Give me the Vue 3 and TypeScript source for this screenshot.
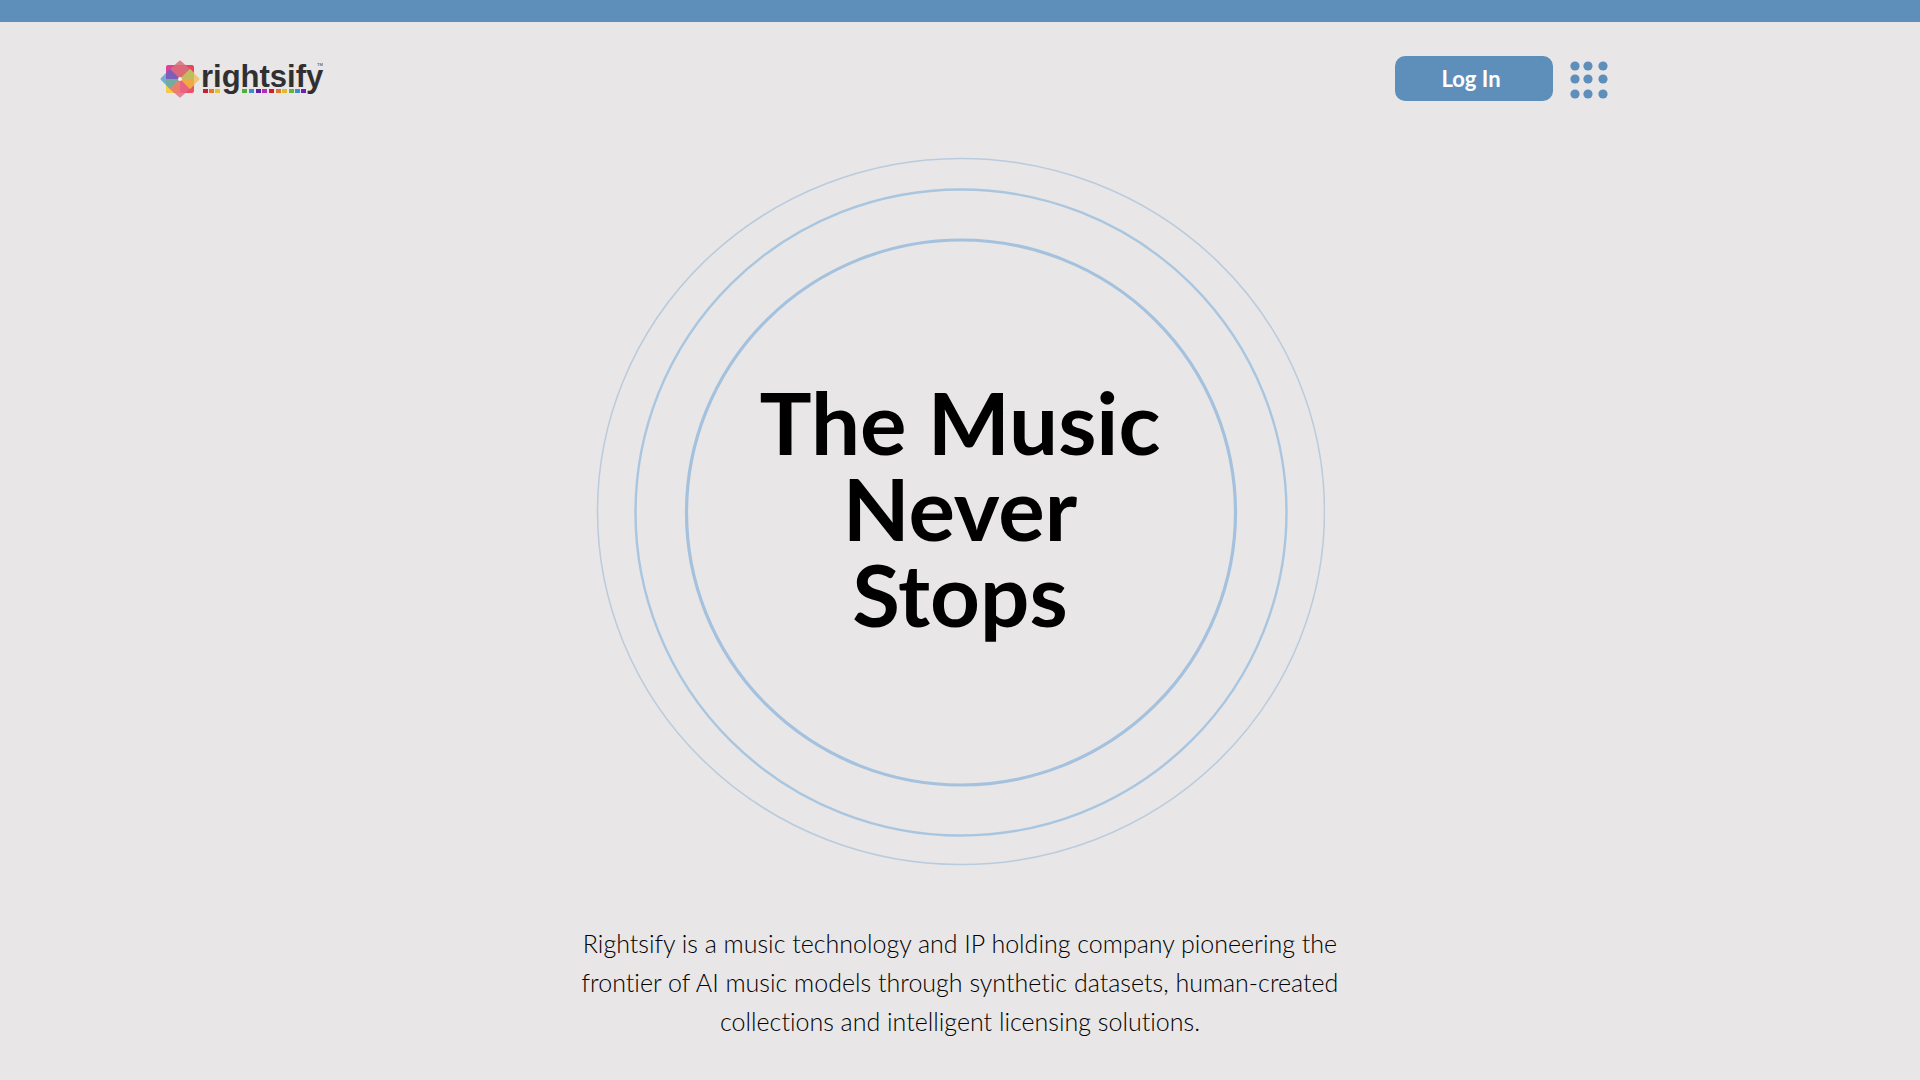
<script setup lang="ts">
interface Dash {
  x: number
  color: string
}

const dashes: Dash[] = [
  { x: 43, color: '#c8202c' },
  { x: 49, color: '#e5792a' },
  { x: 55, color: '#e3c32e' },
  { x: 82, color: '#4fae3a' },
  { x: 89, color: '#3d8bd0' },
  { x: 96, color: '#5b1fa0' },
  { x: 102, color: '#b52bc0' },
  { x: 109, color: '#cc2030' },
  { x: 116, color: '#dd7a2c' },
  { x: 122, color: '#e3b92e' },
  { x: 129, color: '#62b53a' },
  { x: 135, color: '#3d8bd0' },
  { x: 141, color: '#6a24a8' },
]

const columns: number[] = [5, 18, 33]
const rows: number[] = [7, 20, 35]
</script>

<template>
  <div class="page">
    <header class="header">
      <a href="#" class="logo" aria-label="rightsify">
        <svg width="168" height="44" viewBox="0 0 168 44">
          <g transform="translate(20 22)">
            <rect x="-14" y="-14" width="28" height="28" rx="3" fill="#e9407c" />
            <path d="M0 0V-14H11a3 3 0 0 1 3 3V0z" fill="#e8455f" />
            <path d="M0 0V14H-11a3 3 0 0 1-3-3V0z" fill="#f6cf45" />
            <path d="M0 0V14H11a3 3 0 0 0 3-3V0z" fill="#ee4f62" />
            <path d="M0 0L-10-10L-1-18Q0-19 1-18L10-10z" fill="#d9707c" opacity="0.85" />
            <path d="M0 0L-10-10L-19-1Q-20 0-19 1L-10 10z" fill="#5a9fc8" opacity="0.8" />
            <path d="M0 0L10-10L19-1Q20 0 19 1L10 10z" fill="#f0bf60" opacity="0.85" />
            <path d="M0 0L-10 10L-1 18Q0 19 1 18L10 10z" fill="#e4688a" opacity="0.8" />
            <path d="M-10-10L-14-6V-11a3 3 0 0 1 3-3H-6z" fill="#e0409c" />
            <path d="M0 0L-10-10L-14-6V0z" fill="#7a58b8" opacity="0.85" />
            <path d="M0 0L10-10L14-6V0z" fill="#b6bf5e" opacity="0.85" />
            <path d="M0 0H14V6L10 10z" fill="#f0a83e" opacity="0.8" />
            <path d="M0 0H-14V6L-10 10z" fill="#74ae9c" opacity="0.7" />
            <path d="M0 0V14H-6L-10 10z" fill="#ef7f68" opacity="0.7" />
            <circle r="2" fill="#f7eef0" />
          </g>
          <text class="logo-name" x="41" y="30">rightsify</text>
          <text class="logo-mark" x="157" y="9">TM</text>
          <rect v-for="d in dashes" :key="d.x" :x="d.x" y="32" width="5" height="4" :fill="d.color" />
        </svg>
      </a>
      <nav class="actions">
        <button type="button" class="login">Log In</button>
        <button type="button" class="menu" aria-label="Menu">
          <svg width="38" height="40" viewBox="0 0 38 40">
            <template v-for="y in rows" :key="y">
              <circle v-for="x in columns" :key="x" :cx="x" :cy="y" r="4.6" />
            </template>
          </svg>
        </button>
      </nav>
    </header>

    <main class="main">
      <section class="hero">
        <svg class="rings" viewBox="0 0 730 710" aria-hidden="true">
          <ellipse cx="366" cy="354.5" rx="363.5" ry="353" stroke="#b9cbdd" stroke-width="1.5" />
          <ellipse cx="366" cy="355.5" rx="325.5" ry="323" stroke="#a9c6e0" stroke-width="2.4" />
          <ellipse cx="366" cy="355.5" rx="274.5" ry="272.5" stroke="#a4c1de" stroke-width="3.2" />
        </svg>
        <h1 class="title">The Music<br />Never<br />Stops</h1>
      </section>
      <p class="intro">
        Rightsify is a music technology and IP holding company pioneering the<br />
        frontier of AI music models through synthetic datasets, human-created<br />
        collections and intelligent licensing solutions.
      </p>
    </main>
  </div>
</template>

<style>
body {
  margin: 0;
  background: #e8e6e7;
}
</style>

<style scoped>
.page {
  min-height: 100vh;
  box-sizing: border-box;
  border-top: 22px solid #5e8fbb;
  background: #e8e6e7;
  font-family: Lato, "Liberation Sans", sans-serif;
  color: #000;
}
.header {
  display: flex;
  justify-content: space-between;
  align-items: center;
  padding: 34px 312px 0 160px;
}
.logo {
  display: block;
}
.logo svg,
.menu svg {
  display: block;
}
.logo-name {
  font: bold 31px "Liberation Sans", Arial, sans-serif;
  fill: #303033;
}
.logo-mark {
  font: 4px "Liberation Sans", Arial, sans-serif;
  fill: #303033;
}
.actions {
  display: flex;
  align-items: center;
  gap: 17px;
}
.login {
  width: 158px;
  height: 45px;
  padding: 0 6px 0 0;
  border: 0;
  border-radius: 10px;
  background: #5e8fbb;
  color: #fff;
  font: bold 22px Lato, sans-serif;
  cursor: pointer;
}
.menu {
  padding: 0;
  border: 0;
  background: none;
  fill: #5e8fbb;
  cursor: pointer;
}
.main {
  display: flex;
  flex-direction: column;
  align-items: center;
}
.hero {
  display: grid;
  place-items: center;
  margin-top: 56px;
}
.rings,
.title {
  grid-area: 1 / 1;
}
.rings {
  width: 730px;
  fill: none;
}
.title {
  margin: 0;
  padding-bottom: 8px;
  font-size: 87px;
  line-height: 86px;
  font-weight: 700;
  text-align: center;
}
.intro {
  margin: 57px 0 0;
  padding-bottom: 30px;
  font-size: 25px;
  line-height: 39px;
  font-weight: 300;
  font-variant-ligatures: none;
  text-align: center;
}
</style>
